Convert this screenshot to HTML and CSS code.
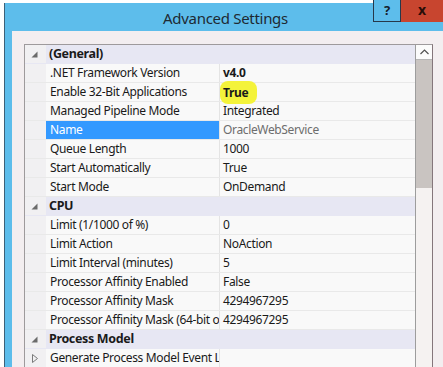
FILE: index.html
```html
<!DOCTYPE html>
<html lang="en">
<head>
    <title>Advanced Settings</title>
    <link rel="stylesheet" href="styles.css">
</head>
<body>
    <div class="dialog">
        <div class="titlebar">
            <span class="title">Advanced Settings</span>
            <div class="caption-btns">
                <span class="btn-help">?</span>
                <span class="btn-close">x</span>
            </div>
        </div>
        <div class="content">
            <div class="grid">
                <div class="rows">
                    <div class="row cat"><span class="gutter"><svg class="tri" width="7" height="7" viewBox="0 0 7 7"><path d="M6.5 0.5 L6.5 6.5 L0.5 6.5 Z" fill="#6b6b6b"/></svg></span><span class="cat-name">(General)</span></div>
                    <div class="row"><span class="gutter"></span><span class="name">.NET Framework Version</span><span class="value bold">v4.0</span></div>
                    <div class="row"><span class="gutter"></span><span class="name">Enable 32-Bit Applications</span><span class="value bold"><span class="marker">True</span></span></div>
                    <div class="row"><span class="gutter"></span><span class="name">Managed Pipeline Mode</span><span class="value">Integrated</span></div>
                    <div class="row selected"><span class="gutter"></span><span class="name">Name</span><span class="value readonly">OracleWebService</span></div>
                    <div class="row"><span class="gutter"></span><span class="name">Queue Length</span><span class="value">1000</span></div>
                    <div class="row"><span class="gutter"></span><span class="name">Start Automatically</span><span class="value">True</span></div>
                    <div class="row"><span class="gutter"></span><span class="name">Start Mode</span><span class="value">OnDemand</span></div>
                    <div class="row cat"><span class="gutter"><svg class="tri" width="7" height="7" viewBox="0 0 7 7"><path d="M6.5 0.5 L6.5 6.5 L0.5 6.5 Z" fill="#6b6b6b"/></svg></span><span class="cat-name">CPU</span></div>
                    <div class="row"><span class="gutter"></span><span class="name">Limit (1/1000 of %)</span><span class="value">0</span></div>
                    <div class="row"><span class="gutter"></span><span class="name">Limit Action</span><span class="value">NoAction</span></div>
                    <div class="row"><span class="gutter"></span><span class="name">Limit Interval (minutes)</span><span class="value">5</span></div>
                    <div class="row"><span class="gutter"></span><span class="name">Processor Affinity Enabled</span><span class="value">False</span></div>
                    <div class="row"><span class="gutter"></span><span class="name">Processor Affinity Mask</span><span class="value">4294967295</span></div>
                    <div class="row"><span class="gutter"></span><span class="name">Processor Affinity Mask (64-bit option)</span><span class="value">4294967295</span></div>
                    <div class="row cat"><span class="gutter"><svg class="tri" width="7" height="7" viewBox="0 0 7 7"><path d="M6.5 0.5 L6.5 6.5 L0.5 6.5 Z" fill="#6b6b6b"/></svg></span><span class="cat-name">Process Model</span></div>
                    <div class="row"><span class="gutter"><svg class="tri" width="6" height="9" viewBox="0 0 6 9"><path d="M0.5 0.5 L5.5 4.5 L0.5 8.5 Z" fill="none" stroke="#7a7a7a" stroke-width="1"/></svg></span><span class="name">Generate Process Model Event Log Entry</span><span class="value"></span></div>
                </div>
                <div class="scrollbar">
                    <div class="sb-up"><svg width="9" height="6" viewBox="0 0 9 6"><path d="M0.5 5 L4.5 1 L8.5 5" fill="none" stroke="#505050" stroke-width="1.2"/></svg></div>
                    <div class="sb-thumb"></div>
                    <div class="sb-track"></div>
                </div>
            </div>
        </div>
    </div>
</body>
</html>
```

FILE: styles.css
```css
body {
    margin: 0;
    background: #ffffff;
    font-family: "Noto Sans", "Open Sans", sans-serif;
    overflow: hidden;
}

.dialog {
    margin: 3px 0 0 4px;
    height: 364px;
    border-left: 1px solid #3d6178;
    padding-left: 7px;
    background: #5dbdeb;
    position: relative;
}

.titlebar {
    height: 28px;
    display: flex;
    align-items: center;
    justify-content: center;
}

.title {
    font-size: 15px;
    letter-spacing: -0.3px;
    color: #1d2a33;
    margin-top: 1px;
    margin-right: 4px;
}

.caption-btns {
    position: absolute;
    top: -3px;
    right: 0;
    display: flex;
    height: 22px;
}

.btn-help {
    width: 26px;
    border: 1px solid #26384a;
    border-top: none;
    background: #5dbdeb;
    color: #14202c;
    font-weight: bold;
    font-size: 13px;
    text-align: center;
    line-height: 20px;
}

.btn-close {
    width: 42px;
    background: #c8452f;
    color: #2a0d08;
    font-weight: bold;
    font-size: 14px;
    text-align: center;
    line-height: 20px;
}

.content {
    height: 336px;
    padding: 13px 0 0 12px;
    background: #f3eef0;
}

.grid {
    width: 407px;
    height: 330px;
    display: flex;
    border: 1px solid #9e9a9c;
    border-right-color: #84767b;
    border-bottom: none;
    background: #f9f9f9;
}

.rows {
    width: 391px;
    overflow: hidden;
}

.row {
    height: 18px;
    display: flex;
    border-bottom: 1px solid #e9e9e9;
    font-size: 12px;
    letter-spacing: -0.35px;
    line-height: 18px;
    color: #1a1a1a;
    white-space: nowrap;
}

.gutter {
    width: 21px;
    flex: none;
    background: #f1f0f2;
    display: flex;
    align-items: center;
    justify-content: center;
}

.tri {
    margin-left: -2px;
}

.name {
    width: 169px;
    flex: none;
    padding-left: 4px;
    border-right: 1px solid #e4e4e4;
    overflow: hidden;
}

.value {
    flex: 1;
    padding-left: 3px;
}

.bold {
    font-weight: bold;
}

.marker {
    display: inline-block;
    position: relative;
    background: #f4f33a;
    border-radius: 8px;
    margin-left: -3px;
    margin-top: -2px;
    padding: 0 9px 0 3px;
    line-height: 23px;
}

.row.cat {
    background: #e7e7f3;
    border-bottom-color: #e7e7f3;
}

.cat-name {
    padding-left: 3px;
    font-weight: bold;
    font-size: 12.5px;
}

.row.selected .name {
    background: #3399ff;
    color: #ffffff;
}

.readonly {
    color: #6d6d6d;
}

.scrollbar {
    width: 16px;
    display: flex;
    flex-direction: column;
    background: #f5f2f1;
    border-left: 1px solid #9d9d9d;
}

.sb-up {
    height: 14px;
    background: #fbfbfb;
    border-bottom: 1px solid #b5b5b5;
    display: flex;
    align-items: center;
    justify-content: center;
}

.sb-thumb {
    height: 128px;
    background: #c9c4c1;
}

.sb-track {
    flex: 1;
}
```
